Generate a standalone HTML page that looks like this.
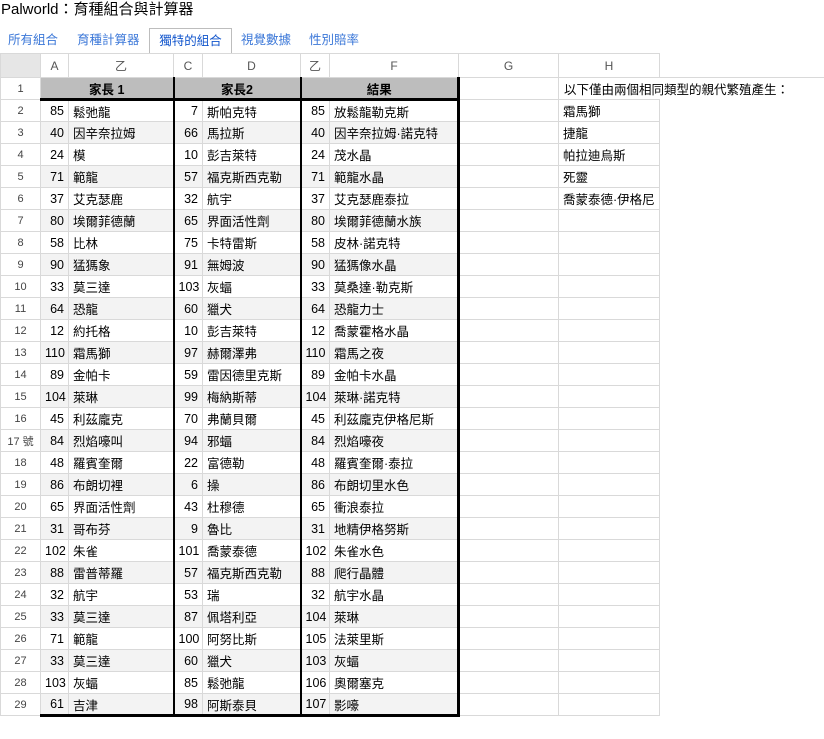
<!DOCTYPE html>
<html><head><meta charset="utf-8"><style>
*{margin:0;padding:0;box-sizing:border-box}
body{width:824px;height:739px;background:#fff;font-family:"Liberation Sans","Noto Sans CJK TC",sans-serif;font-size:13px;color:#000;position:relative;overflow:hidden}
.title{position:absolute;left:1px;top:0;font-size:15px;line-height:20px}
.tabs{position:absolute;top:28px;left:0;height:25px;width:824px}
.tab{position:absolute;top:0;height:25px;line-height:24px;color:#3c78d8;font-size:12.5px}
.tab.act{border:1px solid #bdbdbd;border-bottom:none;background:#fff;color:#1155cc;text-align:center;height:26px}
table{position:absolute;left:0;top:53px;width:824px;border-collapse:collapse;table-layout:fixed}
td{height:22px;border:1px solid #d9d9d9;padding:0 4px;white-space:nowrap;overflow:visible;font-size:12.5px}
tr.h td{height:24px;text-align:center;color:#555;font-size:12px}
td.rn{text-align:center;color:#444;font-size:11px;padding:0}
td.n{text-align:right}
tr.g td.d{background:#f3f3f3}
tr.r1 td.d{background:#bdbdbd;font-weight:bold;text-align:center;border-bottom:3px solid #000}
.bl{border-left:2px solid #000!important}
.br{border-right:3px solid #000!important}
tr.last td.d{border-bottom:3px solid #000}
td.e{border:none}
</style></head><body>
<div class="title">Palworld：育種組合與計算器</div>
<div class="tabs">
<div class="tab" style="left:8px">所有組合</div>
<div class="tab" style="left:77px">育種計算器</div>
<div class="tab act" style="left:149px;width:83px">獨特的組合</div>
<div class="tab" style="left:241px">視覺數據</div>
<div class="tab" style="left:309px">性別賠率</div>
</div>
<table>
<colgroup><col style="width:40px"><col style="width:28px"><col style="width:105px"><col style="width:29px"><col style="width:98px"><col style="width:29px"><col style="width:129px"><col style="width:100px"><col style="width:101px"><col style="width:165px"></colgroup>
<tr class="h"><td style="background:#e6e6e6"></td><td>A</td><td>乙</td><td>C</td><td>D</td><td>乙</td><td>F</td><td>G</td><td>H</td><td class="e" style="border-bottom:1px solid #d9d9d9"></td></tr>
<tr class="r1"><td class="rn">1</td><td class="d" colspan="2">家長 1</td><td class="d bl" colspan="2">家長2</td><td class="d bl br" colspan="2">結果</td><td></td><td class="e" style="overflow:visible;padding-left:5px">以下僅由兩個相同類型的親代繁殖產生：</td><td class="e"></td></tr>
<tr><td class="rn">2</td><td class="d n">85</td><td class="d">鬆弛龍</td><td class="d n bl">7</td><td class="d">斯帕克特</td><td class="d n bl">85</td><td class="d br">放鬆龍勒克斯</td><td></td><td>霜馬獅</td><td class="e"></td></tr>
<tr class="g"><td class="rn">3</td><td class="d n">40</td><td class="d">因辛奈拉姆</td><td class="d n bl">66</td><td class="d">馬拉斯</td><td class="d n bl">40</td><td class="d br">因辛奈拉姆·諾克特</td><td></td><td>捷龍</td><td class="e"></td></tr>
<tr><td class="rn">4</td><td class="d n">24</td><td class="d">模</td><td class="d n bl">10</td><td class="d">彭吉萊特</td><td class="d n bl">24</td><td class="d br">茂水晶</td><td></td><td>帕拉迪烏斯</td><td class="e"></td></tr>
<tr class="g"><td class="rn">5</td><td class="d n">71</td><td class="d">範龍</td><td class="d n bl">57</td><td class="d">福克斯西克勒</td><td class="d n bl">71</td><td class="d br">範龍水晶</td><td></td><td>死靈</td><td class="e"></td></tr>
<tr><td class="rn">6</td><td class="d n">37</td><td class="d">艾克瑟鹿</td><td class="d n bl">32</td><td class="d">航宇</td><td class="d n bl">37</td><td class="d br">艾克瑟鹿泰拉</td><td></td><td>喬蒙泰德·伊格尼</td><td class="e"></td></tr>
<tr class="g"><td class="rn">7</td><td class="d n">80</td><td class="d">埃爾菲德蘭</td><td class="d n bl">65</td><td class="d">界面活性劑</td><td class="d n bl">80</td><td class="d br">埃爾菲德蘭水族</td><td></td><td></td><td class="e"></td></tr>
<tr><td class="rn">8</td><td class="d n">58</td><td class="d">比林</td><td class="d n bl">75</td><td class="d">卡特雷斯</td><td class="d n bl">58</td><td class="d br">皮林·諾克特</td><td></td><td></td><td class="e"></td></tr>
<tr class="g"><td class="rn">9</td><td class="d n">90</td><td class="d">猛獁象</td><td class="d n bl">91</td><td class="d">無姆波</td><td class="d n bl">90</td><td class="d br">猛獁像水晶</td><td></td><td></td><td class="e"></td></tr>
<tr><td class="rn">10</td><td class="d n">33</td><td class="d">莫三達</td><td class="d n bl">103</td><td class="d">灰蝠</td><td class="d n bl">33</td><td class="d br">莫桑達·勒克斯</td><td></td><td></td><td class="e"></td></tr>
<tr class="g"><td class="rn">11</td><td class="d n">64</td><td class="d">恐龍</td><td class="d n bl">60</td><td class="d">獵犬</td><td class="d n bl">64</td><td class="d br">恐龍力士</td><td></td><td></td><td class="e"></td></tr>
<tr><td class="rn">12</td><td class="d n">12</td><td class="d">約托格</td><td class="d n bl">10</td><td class="d">彭吉萊特</td><td class="d n bl">12</td><td class="d br">喬蒙霍格水晶</td><td></td><td></td><td class="e"></td></tr>
<tr class="g"><td class="rn">13</td><td class="d n">110</td><td class="d">霜馬獅</td><td class="d n bl">97</td><td class="d">赫爾澤弗</td><td class="d n bl">110</td><td class="d br">霜馬之夜</td><td></td><td></td><td class="e"></td></tr>
<tr><td class="rn">14</td><td class="d n">89</td><td class="d">金帕卡</td><td class="d n bl">59</td><td class="d">雷因德里克斯</td><td class="d n bl">89</td><td class="d br">金帕卡水晶</td><td></td><td></td><td class="e"></td></tr>
<tr class="g"><td class="rn">15</td><td class="d n">104</td><td class="d">萊琳</td><td class="d n bl">99</td><td class="d">梅納斯蒂</td><td class="d n bl">104</td><td class="d br">萊琳·諾克特</td><td></td><td></td><td class="e"></td></tr>
<tr><td class="rn">16</td><td class="d n">45</td><td class="d">利茲龐克</td><td class="d n bl">70</td><td class="d">弗蘭貝爾</td><td class="d n bl">45</td><td class="d br">利茲龐克伊格尼斯</td><td></td><td></td><td class="e"></td></tr>
<tr class="g"><td class="rn">17 號</td><td class="d n">84</td><td class="d">烈焰嚎叫</td><td class="d n bl">94</td><td class="d">邪蝠</td><td class="d n bl">84</td><td class="d br">烈焰嚎夜</td><td></td><td></td><td class="e"></td></tr>
<tr><td class="rn">18</td><td class="d n">48</td><td class="d">羅賓奎爾</td><td class="d n bl">22</td><td class="d">富德勒</td><td class="d n bl">48</td><td class="d br">羅賓奎爾·泰拉</td><td></td><td></td><td class="e"></td></tr>
<tr class="g"><td class="rn">19</td><td class="d n">86</td><td class="d">布朗切裡</td><td class="d n bl">6</td><td class="d">操</td><td class="d n bl">86</td><td class="d br">布朗切里水色</td><td></td><td></td><td class="e"></td></tr>
<tr><td class="rn">20</td><td class="d n">65</td><td class="d">界面活性劑</td><td class="d n bl">43</td><td class="d">杜穆德</td><td class="d n bl">65</td><td class="d br">衝浪泰拉</td><td></td><td></td><td class="e"></td></tr>
<tr class="g"><td class="rn">21</td><td class="d n">31</td><td class="d">哥布芬</td><td class="d n bl">9</td><td class="d">魯比</td><td class="d n bl">31</td><td class="d br">地精伊格努斯</td><td></td><td></td><td class="e"></td></tr>
<tr><td class="rn">22</td><td class="d n">102</td><td class="d">朱雀</td><td class="d n bl">101</td><td class="d">喬蒙泰德</td><td class="d n bl">102</td><td class="d br">朱雀水色</td><td></td><td></td><td class="e"></td></tr>
<tr class="g"><td class="rn">23</td><td class="d n">88</td><td class="d">雷普蒂羅</td><td class="d n bl">57</td><td class="d">福克斯西克勒</td><td class="d n bl">88</td><td class="d br">爬行晶體</td><td></td><td></td><td class="e"></td></tr>
<tr><td class="rn">24</td><td class="d n">32</td><td class="d">航宇</td><td class="d n bl">53</td><td class="d">瑞</td><td class="d n bl">32</td><td class="d br">航宇水晶</td><td></td><td></td><td class="e"></td></tr>
<tr class="g"><td class="rn">25</td><td class="d n">33</td><td class="d">莫三達</td><td class="d n bl">87</td><td class="d">佩塔利亞</td><td class="d n bl">104</td><td class="d br">萊琳</td><td></td><td></td><td class="e"></td></tr>
<tr><td class="rn">26</td><td class="d n">71</td><td class="d">範龍</td><td class="d n bl">100</td><td class="d">阿努比斯</td><td class="d n bl">105</td><td class="d br">法萊里斯</td><td></td><td></td><td class="e"></td></tr>
<tr class="g"><td class="rn">27</td><td class="d n">33</td><td class="d">莫三達</td><td class="d n bl">60</td><td class="d">獵犬</td><td class="d n bl">103</td><td class="d br">灰蝠</td><td></td><td></td><td class="e"></td></tr>
<tr><td class="rn">28</td><td class="d n">103</td><td class="d">灰蝠</td><td class="d n bl">85</td><td class="d">鬆弛龍</td><td class="d n bl">106</td><td class="d br">奧爾塞克</td><td></td><td></td><td class="e"></td></tr>
<tr class="g last"><td class="rn">29</td><td class="d n">61</td><td class="d">吉津</td><td class="d n bl">98</td><td class="d">阿斯泰貝</td><td class="d n bl">107</td><td class="d br">影嚎</td><td></td><td></td><td class="e"></td></tr>
</table>
</body></html>
